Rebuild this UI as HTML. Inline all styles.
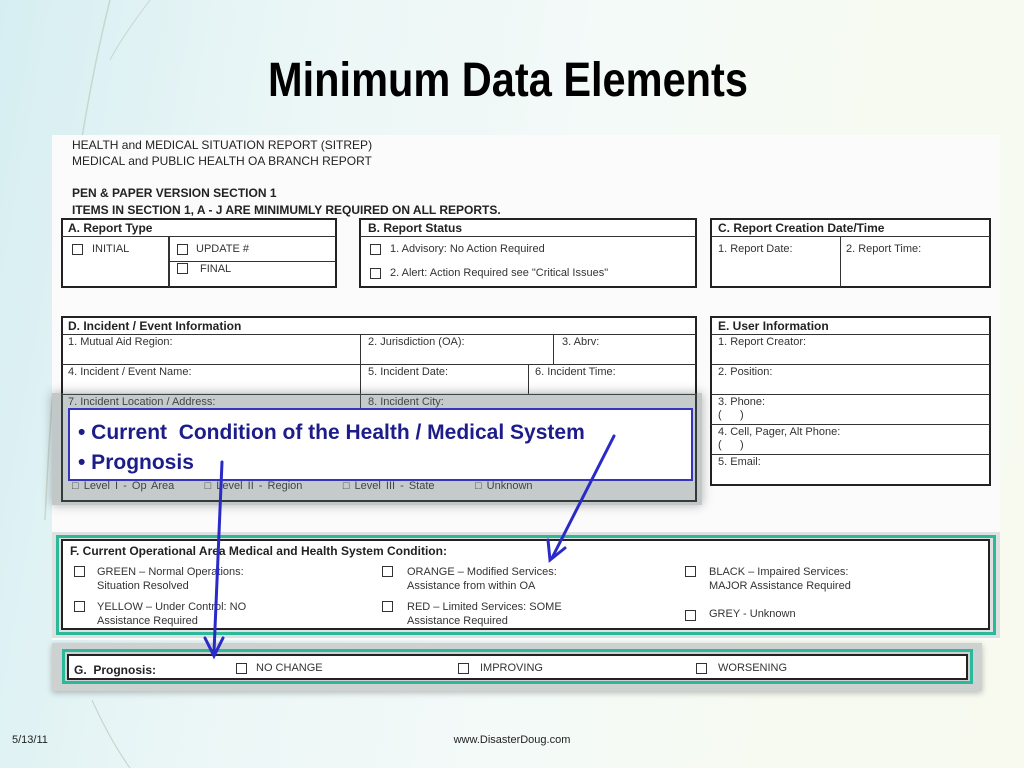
<!DOCTYPE html>
<html><head><meta charset="utf-8"><style>
*{margin:0;padding:0;box-sizing:border-box}
body{width:1024px;height:768px;position:relative;overflow:hidden;font-family:"Liberation Sans",sans-serif;
background:linear-gradient(100deg,#d6eef2 0%,#eaf6f6 25%,#f4faf8 55%,#f6faf0 80%,#f8faf0 100%)}
.a{position:absolute}
.bx{position:absolute;border:2px solid #222;background:#fff}
.t{position:absolute;font-size:11px;color:#333;white-space:nowrap;font-family:"Liberation Sans",sans-serif}
.b{font-weight:bold;color:#222;font-size:12px}
.hl{position:absolute;height:1px;background:#333}
.vl{position:absolute;width:1px;background:#333}
.cb{position:absolute;width:11px;height:11px;border:1.5px solid #333;background:#fff}
</style></head><body>
<svg class="a" style="left:0;top:0" width="1024" height="768">
<path d="M110 0 Q60 200 45 520" stroke="#c8d8d0" stroke-width="1.5" fill="none"/>
<path d="M150 0 Q120 40 110 60" stroke="#c8d8d0" stroke-width="1" fill="none"/>
<path d="M92 700 Q110 740 130 768" stroke="#c8d0c8" stroke-width="1" fill="none"/>
</svg>
<div class="a" style="left:0;top:52px;width:1016px;text-align:center;font-family:'Liberation Sans Narrow','Liberation Sans',sans-serif;font-weight:bold;font-size:48px;color:#000;line-height:58px;transform:scaleX(0.865);transform-origin:508px 0">Minimum Data Elements</div>

<div class="a" style="left:52px;top:135px;width:948px;height:505px;background:#fbfbfb"></div>
<div class="t b" style="left:72px;top:138px;font-weight:normal;color:#222">HEALTH and MEDICAL SITUATION REPORT (SITREP)</div>
<div class="t b" style="left:72px;top:154px;font-weight:normal;color:#222">MEDICAL and PUBLIC HEALTH OA BRANCH REPORT</div>
<div class="t b" style="left:72px;top:186px">PEN &amp; PAPER VERSION SECTION 1</div>
<div class="t b" style="left:72px;top:203px">ITEMS IN SECTION 1, A - J ARE MINIMUMLY REQUIRED ON ALL REPORTS.</div>

<!-- A -->
<div class="bx" style="left:61px;top:218px;width:276px;height:70px"></div>
<div class="hl" style="left:62px;top:236px;width:274px"></div>
<div class="vl" style="left:168px;top:236px;height:51px;width:2px"></div>
<div class="hl" style="left:169px;top:261px;width:167px"></div>
<div class="t b" style="left:68px;top:221px">A. Report Type</div>
<div class="cb" style="left:72px;top:244px"></div><div class="t" style="left:92px;top:243px">INITIAL</div>
<div class="cb" style="left:177px;top:244px"></div><div class="t" style="left:196px;top:243px">UPDATE #</div>
<div class="cb" style="left:177px;top:263px"></div><div class="t" style="left:200px;top:263px">FINAL</div>
<!-- B -->
<div class="bx" style="left:359px;top:218px;width:338px;height:70px"></div>
<div class="hl" style="left:360px;top:236px;width:336px"></div>
<div class="t b" style="left:368px;top:221px">B. Report Status</div>
<div class="cb" style="left:370px;top:244px"></div><div class="t" style="left:390px;top:243px">1. Advisory: No Action Required</div>
<div class="cb" style="left:370px;top:268px"></div><div class="t" style="left:390px;top:267px">2. Alert: Action Required see "Critical Issues"</div>
<!-- C -->
<div class="bx" style="left:710px;top:218px;width:281px;height:70px"></div>
<div class="hl" style="left:711px;top:236px;width:279px"></div>
<div class="vl" style="left:840px;top:236px;height:51px"></div>
<div class="t b" style="left:718px;top:221px">C. Report Creation Date/Time</div>
<div class="t" style="left:718px;top:243px">1. Report Date:</div>
<div class="t" style="left:846px;top:243px">2. Report Time:</div>

<!-- D -->
<div class="bx" style="left:61px;top:316px;width:636px;height:186px"></div>
<div class="hl" style="left:62px;top:334px;width:634px"></div>
<div class="hl" style="left:62px;top:364px;width:634px"></div>
<div class="hl" style="left:62px;top:394px;width:634px"></div>
<div class="vl" style="left:360px;top:334px;height:100px"></div>
<div class="vl" style="left:553px;top:334px;height:30px"></div>
<div class="vl" style="left:528px;top:364px;height:30px"></div>
<div class="t b" style="left:68px;top:319px">D. Incident / Event Information</div>
<div class="t" style="left:68px;top:336px">1. Mutual Aid Region:</div>
<div class="t" style="left:368px;top:336px">2. Jurisdiction (OA):</div>
<div class="t" style="left:562px;top:336px">3. Abrv:</div>
<div class="t" style="left:68px;top:366px">4. Incident / Event Name:</div>
<div class="t" style="left:368px;top:366px">5. Incident Date:</div>
<div class="t" style="left:535px;top:366px">6. Incident Time:</div>
<div class="t" style="left:68px;top:396px">7. Incident Location / Address:</div>
<div class="t" style="left:368px;top:396px">8. Incident City:</div>
<div class="t" style="left:72px;top:480px;word-spacing:2px">&#9633; Level I - Op Area &nbsp;&nbsp;&nbsp;&nbsp;&nbsp;&#9633; Level II - Region &nbsp;&nbsp;&nbsp;&nbsp;&nbsp;&nbsp;&nbsp;&#9633; Level III - State &nbsp;&nbsp;&nbsp;&nbsp;&nbsp;&nbsp;&nbsp;&#9633; Unknown</div>
<!-- E -->
<div class="bx" style="left:710px;top:316px;width:281px;height:170px"></div>
<div class="hl" style="left:711px;top:334px;width:279px"></div>
<div class="hl" style="left:711px;top:364px;width:279px"></div>
<div class="hl" style="left:711px;top:394px;width:279px"></div>
<div class="hl" style="left:711px;top:424px;width:279px"></div>
<div class="hl" style="left:711px;top:454px;width:279px"></div>
<div class="t b" style="left:718px;top:319px">E. User Information</div>
<div class="t" style="left:718px;top:336px">1. Report Creator:</div>
<div class="t" style="left:718px;top:366px">2. Position:</div>
<div class="t" style="left:718px;top:396px;line-height:13px">3. Phone:<br>(&nbsp;&nbsp;&nbsp;&nbsp;&nbsp;&nbsp;)</div>
<div class="t" style="left:718px;top:426px;line-height:13px">4. Cell, Pager, Alt Phone:<br>(&nbsp;&nbsp;&nbsp;&nbsp;&nbsp;&nbsp;)</div>
<div class="t" style="left:718px;top:456px">5. Email:</div>

<!-- gray overlay -->
<div class="a" style="left:52px;top:393px;width:650px;height:112px;background:rgba(90,105,105,0.35);box-shadow:0 0 10px rgba(0,0,0,.3)"></div>
<div class="a" style="left:68px;top:408px;width:625px;height:73px;background:#fff;border:2px solid #3535c0"></div>
<div class="a" style="left:78px;top:418px;font-weight:bold;font-size:21px;color:#1c1c8a;font-family:'Liberation Sans Narrow','Liberation Sans',sans-serif;line-height:30px;white-space:nowrap">• Current&nbsp; Condition of the Health / Medical System<br>• Prognosis</div>

<!-- F -->
<div class="a" style="left:52px;top:532px;width:948px;height:106px;background:#dde2e0"></div>
<div class="a" style="left:56px;top:535px;width:940px;height:100px;border:3px solid #2cb89a"></div>
<div class="bx" style="left:61px;top:539px;width:929px;height:91px;border-width:2px"></div>
<div class="t b" style="left:70px;top:544px">F. Current Operational Area Medical and Health System Condition:</div>
<div class="cb" style="left:74px;top:566px"></div><div class="t" style="left:97px;top:565px;line-height:14px">GREEN – Normal Operations:<br>Situation Resolved</div>
<div class="cb" style="left:74px;top:601px"></div><div class="t" style="left:97px;top:600px;line-height:14px">YELLOW – Under Control: NO<br>Assistance Required</div>
<div class="cb" style="left:382px;top:566px"></div><div class="t" style="left:407px;top:565px;line-height:14px">ORANGE – Modified Services:<br>Assistance from within OA</div>
<div class="cb" style="left:382px;top:601px"></div><div class="t" style="left:407px;top:600px;line-height:14px">RED – Limited Services: SOME<br>Assistance Required</div>
<div class="cb" style="left:685px;top:566px"></div><div class="t" style="left:709px;top:565px;line-height:14px">BLACK – Impaired Services:<br>MAJOR Assistance Required</div>
<div class="cb" style="left:685px;top:610px"></div><div class="t" style="left:709px;top:608px">GREY - Unknown</div>

<!-- G -->
<div class="a" style="left:52px;top:643px;width:930px;height:48px;background:#cdd2d0;box-shadow:0 2px 6px rgba(0,0,0,.25)"></div>
<div class="a" style="left:62px;top:649px;width:911px;height:35px;border:3px solid #2cb89a"></div>
<div class="bx" style="left:67px;top:654px;width:901px;height:26px;border-width:2px"></div>
<div class="t b" style="left:74px;top:663px">G.&nbsp; Prognosis:</div>
<div class="cb" style="left:236px;top:663px"></div><div class="t" style="left:256px;top:662px">NO CHANGE</div>
<div class="cb" style="left:458px;top:663px"></div><div class="t" style="left:480px;top:662px">IMPROVING</div>
<div class="cb" style="left:696px;top:663px"></div><div class="t" style="left:718px;top:662px">WORSENING</div>

<!-- arrows -->
<svg class="a" style="left:0;top:0" width="1024" height="768">
<g stroke="#2a2ac8" stroke-width="3" fill="none" stroke-linecap="round">
<path d="M222 462 L214 652"/><path d="M205 638 L214 656 L223 638"/>
<path d="M614 436 L552 558"/><path d="M548 540 L550 560 L565 548"/>
</g></svg>

<div class="t" style="left:12px;top:734px;font-size:11px;color:#222">5/13/11</div>
<div class="t" style="left:0;width:1024px;text-align:center;top:734px;font-size:11px;color:#222">www.DisasterDoug.com</div>
</body></html>
